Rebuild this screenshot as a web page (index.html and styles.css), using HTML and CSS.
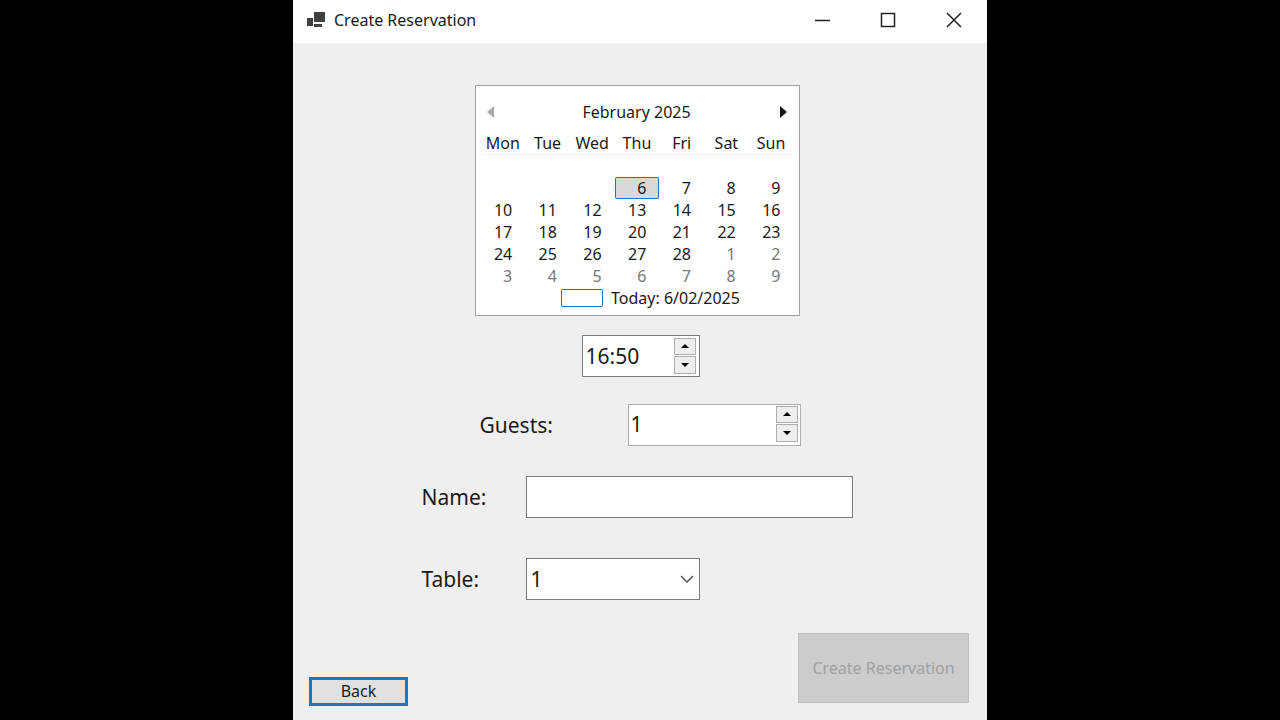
FILE: index.html
```html
<!DOCTYPE html>
<html lang="en">
<head>
<meta charset="utf-8">
<title>Create Reservation</title>
<link rel="stylesheet" href="styles.css">
</head>
<body>
<div class="window">
  <header class="titlebar">
    <svg class="app-icon" width="18" height="16" viewBox="0 0 18 16" fill="#404040" aria-hidden="true"><path d="M7 0h11v10H7zM0 6h6v8H0zM7 12h8v3H7z"/></svg>
    <h1 class="title">Create Reservation</h1>
    <button class="caption" type="button" aria-label="Minimize"><svg width="16" height="16" viewBox="0 0 16 16"><path d="M1 8.5h15"/></svg></button>
    <button class="caption" type="button" aria-label="Maximize"><svg width="16" height="16" viewBox="0 0 16 16"><path d="M1.5 1.5h13v13h-13z"/></svg></button>
    <button class="caption" type="button" aria-label="Close"><svg width="16" height="16" viewBox="0 0 16 16"><path d="M1 1l14 14M15 1L1 15"/></svg></button>
  </header>
  <form class="form">
    <div class="fields">
      <section class="calendar" aria-label="Date">
        <div class="month">
          <button class="nav prev" type="button" aria-label="Previous month"><svg width="7" height="12" viewBox="0 0 7 12"><path d="M7 0v12L0 6z"/></svg></button>
          <span>February 2025</span>
          <button class="nav next" type="button" aria-label="Next month"><svg width="7" height="12" viewBox="0 0 7 12"><path d="M0 0v12l7-6z"/></svg></button>
        </div>
        <table class="days">
          <thead><tr><th>Mon</th><th>Tue</th><th>Wed</th><th>Thu</th><th>Fri</th><th>Sat</th><th>Sun</th></tr></thead>
          <tbody>
            <tr><td></td><td></td><td></td><td></td><td></td><td></td><td></td></tr>
            <tr><td></td><td></td><td></td><td class="selected">6</td><td>7</td><td>8</td><td>9</td></tr>
            <tr><td>10</td><td>11</td><td>12</td><td>13</td><td>14</td><td>15</td><td>16</td></tr>
            <tr><td>17</td><td>18</td><td>19</td><td>20</td><td>21</td><td>22</td><td>23</td></tr>
            <tr><td>24</td><td>25</td><td>26</td><td>27</td><td>28</td><td class="other">1</td><td class="other">2</td></tr>
            <tr><td class="other">3</td><td class="other">4</td><td class="other">5</td><td class="other">6</td><td class="other">7</td><td class="other">8</td><td class="other">9</td></tr>
          </tbody>
        </table>
        <div class="today"><span class="today-box"></span><span>Today: 6/02/2025</span></div>
      </section>

      <div class="row time-row">
        <div class="spinner time">
          <input class="value" type="text" value="16:50" aria-label="Time">
          <div class="steps">
            <button type="button" aria-label="Later"><svg width="8" height="4" viewBox="0 0 8 4"><path d="M0 4h8L4 0z"/></svg></button>
            <button type="button" aria-label="Earlier"><svg width="8" height="4" viewBox="0 0 8 4"><path d="M0 0h8L4 4z"/></svg></button>
          </div>
        </div>
      </div>

      <div class="row guests-row">
        <label for="guests">Guests:</label>
        <div class="spinner guests">
          <input class="value" id="guests" type="number" min="1" value="1">
          <div class="steps">
            <button type="button" aria-label="More guests"><svg width="8" height="4" viewBox="0 0 8 4"><path d="M0 4h8L4 0z"/></svg></button>
            <button type="button" aria-label="Fewer guests"><svg width="8" height="4" viewBox="0 0 8 4"><path d="M0 0h8L4 4z"/></svg></button>
          </div>
        </div>
      </div>

      <div class="row name-row">
        <label for="name">Name:</label>
        <input class="text" id="name" type="text">
      </div>

      <div class="row table-row">
        <label for="table">Table:</label>
        <div class="combo">
          <select id="table"><option>1</option></select>
          <svg class="chevron" width="14" height="8" viewBox="0 0 14 8" aria-hidden="true"><path d="M1 1l6 6 6-6"/></svg>
        </div>
      </div>
    </div>
    <div class="actions">
      <button class="back" type="button">Back</button>
      <button class="create" type="submit" disabled>Create Reservation</button>
    </div>
  </form>
</div>
</body>
</html>
```

FILE: styles.css
```css
* { box-sizing: border-box; }

body {
  margin: 0;
  background: #000;
  color: #1a1a1a;
  font: 16px/22px "Noto Sans", "Open Sans", sans-serif;
}

button, input, select {
  margin: 0;
  padding: 0;
  font: inherit;
  color: inherit;
  border-radius: 0;
}

.window {
  display: flex;
  flex-direction: column;
  max-width: 694px;
  min-height: 100vh;
  margin: 0 auto;
  background: #efefef;
}

.titlebar {
  display: flex;
  align-items: center;
  height: 43px;
  padding: 0 0 3px 14px;
  background: #fff;
}

.title {
  flex: 1;
  margin: 0 0 0 9px;
  font-size: 16px;
  font-weight: 400;
}

.caption {
  display: grid;
  place-items: center;
  width: 66px;
  height: 40px;
  border: 0;
  background: none;
}

.caption svg { fill: none; stroke: #222; stroke-width: 1.5; }

.form {
  display: flex;
  flex: 1;
  flex-direction: column;
  justify-content: space-between;
  padding: 42px 18px 14px 16px;
}

.fields {
  width: 100%;
  max-width: 435px;
  margin: 0 auto;
  padding-right: 4px;
}

.calendar {
  width: 325px;
  max-width: 100%;
  margin: 0 auto;
  padding: 15px 5px 6px;
  border: 1px solid #a0a0a0;
  background: #fff;
  font-size: 16px;
}

.month {
  display: flex;
  align-items: center;
  justify-content: space-between;
  padding: 0 7px 0 6px;
}

.nav {
  display: flex;
  padding: 0;
  border: 0;
  background: none;
}

.prev { fill: #aaa; }
.next { fill: #111; }

.days {
  width: 100%;
  margin-top: 9px;
  border-collapse: collapse;
  table-layout: fixed;
}

.days th {
  height: 22px;
  padding: 0;
  border-bottom: 1px solid #f2f2f2;
  font-weight: 400;
}

.days td {
  height: 22px;
  padding: 0 13px 0 0;
  line-height: 20px;
  text-align: right;
}

.days .selected {
  border-radius: 2px;
  background: #d9d9d9;
  box-shadow: inset 0 0 0 1px #2b6fae;
}

.days .other { color: #777; }

.today {
  display: flex;
  align-items: center;
  justify-content: center;
  gap: 8px;
  padding-left: 27px;
}

.today-box {
  width: 42px;
  height: 18px;
  border: 1px solid #2b6fae;
  border-radius: 2px;
}

.row {
  display: flex;
  align-items: center;
  font-size: 21px;
}

.time-row { margin-top: 19px; padding-left: 160px; }
.guests-row { margin-top: 27px; padding-left: 58px; }
.name-row { margin-top: 30px; }
.table-row { margin-top: 40px; }

.row label { width: 104px; }
.guests-row label { width: 148px; }

.spinner {
  display: flex;
  height: 42px;
  padding: 2px 3px;
  border: 1px solid #7a7a7a;
  background: #fff;
}

.time { width: 118px; }
.guests { width: 173px; padding: 1px 2px 3px; border-color: #adadad; }

.value {
  flex: 1;
  min-width: 0;
  border: 0;
  background: none;
  appearance: textfield;
}

.value::-webkit-inner-spin-button { display: none; }

.steps {
  display: grid;
  gap: 1px;
  width: 22px;
}

.steps button {
  display: grid;
  place-items: center;
  border: 1px solid #adadad;
  background: #eee;
}

.text {
  flex: 1;
  min-width: 0;
  height: 42px;
  padding: 0 4px;
  border: 1px solid #7a7a7a;
  background: #fff;
}

.combo {
  position: relative;
  width: 174px;
}

.combo select {
  display: block;
  width: 100%;
  height: 42px;
  padding: 0 4px;
  border: 1px solid #7a7a7a;
  background: #fff;
  appearance: none;
}

.chevron {
  position: absolute;
  top: 17px;
  right: 6px;
  fill: none;
  stroke: #555;
  stroke-width: 1.5;
  pointer-events: none;
}

.actions {
  display: flex;
  align-items: flex-end;
  justify-content: space-between;
}

.back {
  width: 99px;
  height: 29px;
  padding-bottom: 2px;
  border: 3px solid #1c78bd;
  background: #e1e1e1;
  font-size: 16px;
}

.create {
  width: 171px;
  height: 70px;
  margin-bottom: 3px;
  border: 1px solid #bfbfbf;
  background: #ccc;
  color: #a0a0a0;
  font-size: 16px;
}
```
